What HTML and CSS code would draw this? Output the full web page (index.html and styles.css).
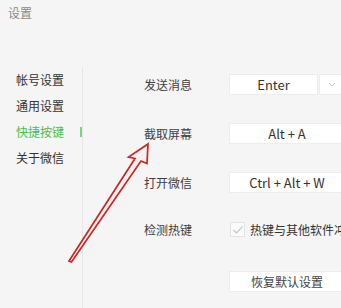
FILE: index.html
```html
<!DOCTYPE html>
<html lang="zh">
<head>
<meta charset="utf-8">
<link rel="stylesheet" href="styles.css">
</head>
<body>
<div class="app">
  <header class="title">设置</header>
  <div class="main">
    <nav class="nav">
      <div class="nav-item">帐号设置</div>
      <div class="nav-item">通用设置</div>
      <div class="nav-item active"><span>快捷按键</span><span class="indicator"></span></div>
      <div class="nav-item">关于微信</div>
    </nav>
    <section class="content">
      <div class="row">
        <div class="label">发送消息</div>
        <div class="box box-short">Enter</div>
        <div class="drop">
          <svg width="8" height="5" viewBox="0 0 8 5"><path d="M1 1 L4 4 L7 1" fill="none" stroke="#c8c8c8" stroke-width="1"/></svg>
        </div>
      </div>
      <div class="row">
        <div class="label">截取屏幕</div>
        <div class="box">Alt + A</div>
      </div>
      <div class="row">
        <div class="label">打开微信</div>
        <div class="box">Ctrl + Alt + W</div>
      </div>
      <div class="row row-check">
        <div class="label">检测热键</div>
        <div class="checkbox">
          <svg width="12" height="10" viewBox="0 0 12 10"><path d="M1.5 5 L4.5 8 L10.5 1.5" fill="none" stroke="#c3d3c3" stroke-width="1.4"/></svg>
        </div>
        <div class="check-text">热键与其他软件冲突</div>
      </div>
      <div class="row row-btn">
        <div class="label"></div>
        <div class="box btn">恢复默认设置</div>
      </div>
    </section>
  </div>
  <svg class="arrow" width="341" height="308" viewBox="0 0 341 308">
    <path d="M69 261 L135 158.5 L128.5 157 L148 144 L147 163.5 L141 161 L71.5 262 Z" fill="rgba(255,235,235,0.4)" stroke="#c92626" stroke-width="1.7" stroke-linejoin="miter"/>
  </svg>
</div>
</body>
</html>
```
FILE: styles.css
```css
* { box-sizing: border-box; }
html, body {
  margin: 0;
  padding: 0;
  width: 341px;
  height: 308px;
  overflow: hidden;
  background: #f5f5f5;
}
body {
  font-family: "Noto Sans CJK SC", "Noto Sans", sans-serif;
  font-size: 12px;
  color: #3a3a3a;
}
.app {
  position: relative;
  width: 341px;
  height: 308px;
}
.title {
  height: 67px;
  padding: 6px 0 0 8px;
  font-size: 12px;
  line-height: 14px;
  color: #8a8a8a;
}
.main {
  display: flex;
  height: 241px;
}
.nav {
  width: 83px;
  flex-shrink: 0;
  border-right: 1px solid #e6e6e6;
}
.nav-item {
  height: 26px;
  line-height: 26px;
  padding-left: 16px;
  display: flex;
  align-items: center;
  justify-content: space-between;
  color: #333;
}
.nav-item.active { color: #4dbb4d; }
.indicator {
  width: 2px;
  height: 10px;
  background: #7fd07f;
}
.content {
  padding: 7px 0 0 61px;
  flex: 1;
  min-width: 0;
}
.row {
  display: flex;
  align-items: center;
  height: 21px;
  margin-bottom: 28px;
  white-space: nowrap;
}
.row-check { margin-bottom: 31px; margin-top: -2px; }
.label {
  width: 85px;
  flex-shrink: 0;
  color: #404040;
}
.box {
  width: 116px;
  height: 21px;
  flex-shrink: 0;
  background: #fff;
  border: 1px solid #ededed;
  font-size: 13px;
  line-height: 19px;
  text-align: center;
  color: #333;
}
.box-short { width: 89px; }
.drop {
  width: 30px;
  height: 21px;
  flex-shrink: 0;
  margin-left: 1px;
  background: #fff;
  border: 1px solid #ededed;
  display: flex;
  align-items: center;
  justify-content: center;
  padding-right: 4px;
}
.checkbox {
  width: 15px;
  height: 15px;
  flex-shrink: 0;
  border: 1px solid #e3e3e3;
  background: #fbfbfb;
  display: flex;
  align-items: center;
  justify-content: center;
  margin-left: 1px;
  margin-right: 5px;
}
.check-text { color: #333; }
.btn { color: #444; font-size: 12px; }
.arrow {
  position: absolute;
  left: 0;
  top: 0;
  pointer-events: none;
}
```
